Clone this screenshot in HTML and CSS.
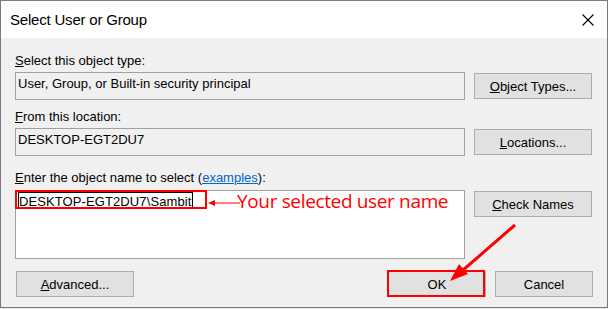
FILE: index.html
```html
<!DOCTYPE html>
<html>
<head>
<meta charset="utf-8">
<link rel="stylesheet" href="styles.css">
</head>
<body>
<div class="window">
  <div class="titlebar">
    <span class="title">Select User or Group</span>
    <svg class="close" width="12" height="12" viewBox="0 0 12 12"><path d="M0.5 0.5L11.5 11.5M11.5 0.5L0.5 11.5" stroke="#000" stroke-width="1.1" fill="none"/></svg>
  </div>
  <div class="content">
    <div class="label"><u>S</u>elect this object type:</div>
    <div class="row">
      <div class="field ro">User, Group, or Built-in security principal</div>
      <button class="btn"><u>O</u>bject Types...</button>
    </div>
    <div class="label l2"><u>F</u>rom this location:</div>
    <div class="row">
      <div class="field ro">DESKTOP-EGT2DU7</div>
      <button class="btn"><u>L</u>ocations...</button>
    </div>
    <div class="label l3"><u>E</u>nter the object name to select (<a class="link">examples</a>):</div>
    <div class="row r3">
      <div class="field multi"><span class="sel">DESKTOP-EGT2DU7\Sambit</span></div>
      <button class="btn"><u>C</u>heck Names</button>
    </div>
    <div class="footer">
      <button class="btn adv"><u>A</u>dvanced...</button>
      <div class="group">
        <button class="btn small">OK</button>
        <button class="btn small">Cancel</button>
      </div>
    </div>
  </div>
  <span class="note">Your selected user name</span>
  <svg class="overlay" width="608" height="309" viewBox="0 0 608 309">
    <rect x="16" y="191" width="190" height="17" fill="none" stroke="#ff0000" stroke-width="2"/>
    <line x1="213" y1="203" x2="240" y2="203" stroke="#ff0000" stroke-width="1"/>
    <polygon points="208,203 215,200 215,206" fill="#ff0000"/>
    <rect x="388" y="271" width="96" height="25" fill="none" stroke="#ff0000" stroke-width="2"/>
    <line x1="515" y1="225" x2="462" y2="271" stroke="#ff0000" stroke-width="3"/>
    <polygon points="450,281 468,274 459,264" fill="#ff0000"/>
  </svg>
</div>
</body>
</html>
```
FILE: styles.css
```css
html, body {
  margin: 0;
  padding: 0;
  background: #e9e9e9;
}
.window {
  position: relative;
  width: 608px;
  height: 308px;
  box-sizing: border-box;
  border: 1px solid #7a7a7a;
  background: #f0f0f0;
  font-family: "Liberation Sans", Arial, sans-serif;
  color: #000;
}
.titlebar {
  display: flex;
  align-items: center;
  height: 37px;
  background: #fff;
  padding-left: 9px;
  padding-right: 13px;
}
.title {
  font-size: 15px;
  line-height: 37px;
  letter-spacing: -0.2px;
  color: #000;
}
.close {
  margin-left: auto;
  display: block;
}
.content {
  padding: 15px 14px 0;
}
.label {
  font-size: 13px;
  line-height: 15px;
  white-space: nowrap;
}
.label.l2 { margin-top: 9px; }
.label.l3 { margin-top: 14px; }
.link {
  color: #0066cc;
  text-decoration: underline;
}
.row {
  display: flex;
  align-items: center;
  gap: 9px;
  margin-top: 4px;
}
.row.r3 {
  align-items: flex-start;
  margin-top: 5px;
}
.row.r3 .btn { margin-top: 1px; }
.field {
  width: 450px;
  height: 28px;
  box-sizing: border-box;
  border: 1px solid #a0a0a0;
  padding: 3px 2px;
  font-size: 13px;
  line-height: 15px;
  white-space: nowrap;
  background: #f0f0f0;
}
.field.multi {
  height: 69px;
  background: #fff;
  padding: 1px 2px;
}
.sel {
  display: block;
  width: fit-content;
  border: 1px solid #000;
  padding: 3px 1px 0 0;
  line-height: 11px;
  letter-spacing: 0.1px;
}
.btn {
  width: 118px;
  height: 26px;
  box-sizing: border-box;
  border: 1px solid #adadad;
  background: #e1e1e1;
  font-family: "Liberation Sans", Arial, sans-serif;
  font-size: 13px;
  line-height: 15px;
  color: #000;
  padding: 0;
  margin: 0;
  flex: none;
}
.btn.small { width: 98px; }
.footer {
  display: flex;
  justify-content: space-between;
  margin-top: 12px;
}
.btn.adv { margin-left: 1px; }
.group {
  display: flex;
  gap: 9px;
}
.note {
  position: absolute;
  left: 236px;
  top: 190px;
  font-family: "Open Sans", sans-serif;
  font-size: 19px;
  line-height: 20px;
  letter-spacing: -0.35px;
  color: #ff0000;
  white-space: nowrap;
}
.overlay {
  position: absolute;
  left: -1px;
  top: -1px;
  pointer-events: none;
}
```
